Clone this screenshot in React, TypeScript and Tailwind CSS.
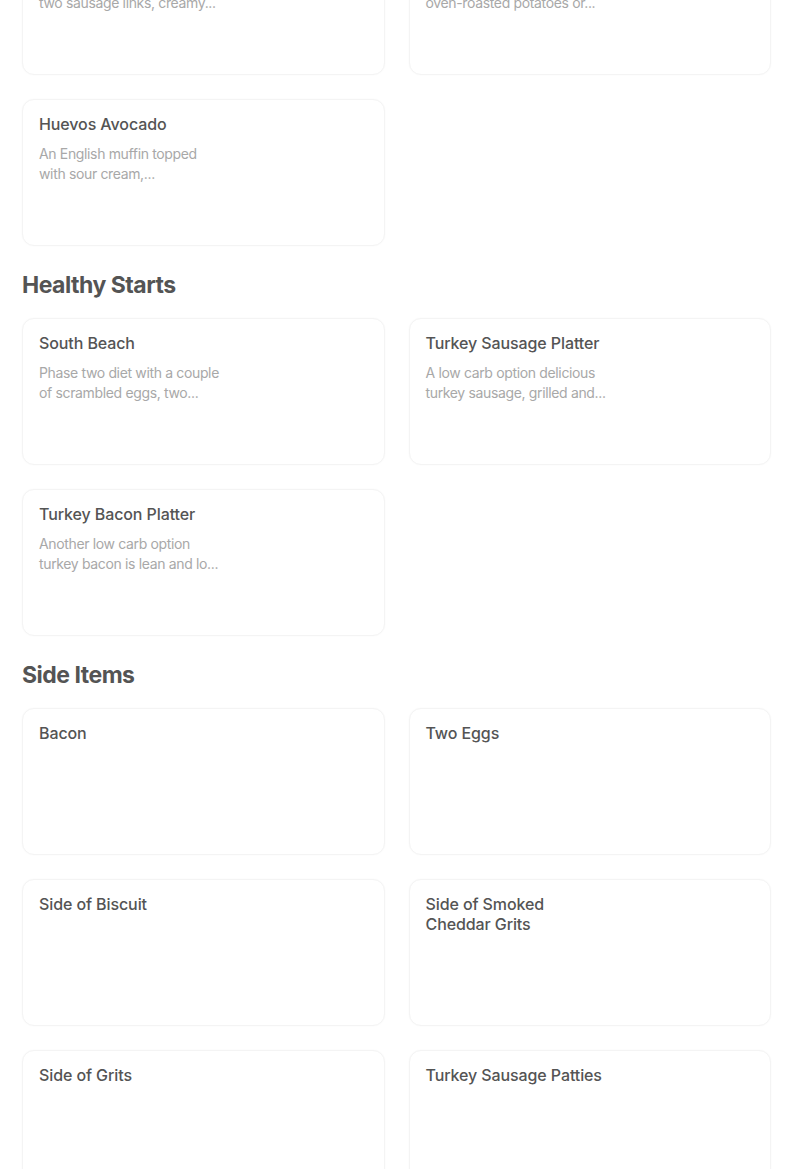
import React from "react";

type Item = { title: string[]; desc?: string[] };

const sections: { heading?: string; items: Item[] }[] = [
  {
    items: [
      { title: ["Southern Breakfast"], desc: ["Two eggs any style with", "two sausage links, creamy..."] },
      { title: ["Classic Breakfast"], desc: ["Two eggs any style with", "oven-roasted potatoes or..."] },
      { title: ["Huevos Avocado"], desc: ["An English muffin topped", "with sour cream,..."] },
    ],
  },
  {
    heading: "Healthy Starts",
    items: [
      { title: ["South Beach"], desc: ["Phase two diet with a couple", "of scrambled eggs, two..."] },
      { title: ["Turkey Sausage Platter"], desc: ["A low carb option delicious", "turkey sausage, grilled and..."] },
      { title: ["Turkey Bacon Platter"], desc: ["Another low carb option", "turkey bacon is lean and lo..."] },
    ],
  },
  {
    heading: "Side Items",
    items: [
      { title: ["Bacon"] },
      { title: ["Two Eggs"] },
      { title: ["Side of Biscuit"] },
      { title: ["Side of Smoked", "Cheddar Grits"] },
      { title: ["Side of Grits"] },
      { title: ["Turkey Sausage Patties"] },
    ],
  },
];

function Card({ item }: { item: Item }) {
  return (
    <div className="h-[147px] rounded-[12px] border border-[#f4f4f4] bg-white px-4 pt-[14px] shadow-[0_0_2px_rgba(0,0,0,0.03)]">
      <div className="text-[16px] leading-5 font-medium text-[#545454] tracking-[-0.1px]">
        {item.title.map((t, i) => (
          <div key={i} className="whitespace-nowrap">{t}</div>
        ))}
      </div>
      {item.desc && (
        <div className="mt-[10px] text-[14px] leading-5 text-[#a8a8a8] tracking-[-0.35px]">
          {item.desc.map((t, i) => (
            <div key={i} className="whitespace-nowrap">{t}</div>
          ))}
        </div>
      )}
    </div>
  );
}

export default function App() {
  return (
    <div
      className="h-[1169px] overflow-hidden bg-white"
      style={{ fontFamily: "Inter, 'Noto Sans', sans-serif" }}
    >
      <div className="-mt-[72px] w-[749px] ml-[22px]">
        {sections.map((s, si) => (
          <div key={si}>
            {s.heading && (
              <h2 className="mt-[23px] mb-[17px] text-[23px] leading-8 font-bold text-[#545454] tracking-[-0.5px]">
                {s.heading}
              </h2>
            )}
            <div className="grid grid-cols-2 gap-x-[24px] gap-y-[24px]">
              {s.items.map((it, i) => (
                <Card key={i} item={it} />
              ))}
            </div>
          </div>
        ))}
      </div>
    </div>
  );
}
